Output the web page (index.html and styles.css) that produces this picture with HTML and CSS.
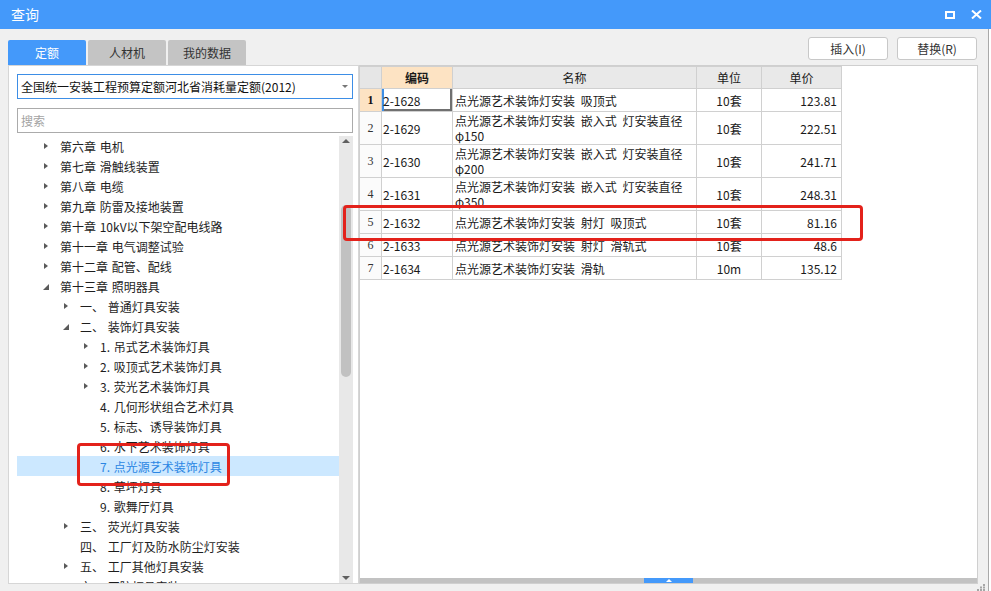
FILE: index.html
```html
<!DOCTYPE html>
<html lang="zh-CN">
<head>
<meta charset="utf-8">
<title>查询</title>
<link rel="stylesheet" href="styles.css">
</head>
<body>
<div class="titlebar">
  <span class="title">查询</span>
  <div class="win-ctrls">
    <span class="ico-max"></span>
    <svg class="ico-close" width="11" height="9" viewBox="0 0 11 9"><path d="M1 0.5 L10 8.5 M10 0.5 L1 8.5" stroke="#fff" stroke-width="2" fill="none"/></svg>
  </div>
</div>
<div class="window">
  <div class="toolbar">
    <div class="tabs">
      <div class="tab active">定额</div>
      <div class="tab">人材机</div>
      <div class="tab">我的数据</div>
    </div>
    <div class="actions">
      <button class="btn">插入(I)</button>
      <button class="btn">替换(R)</button>
    </div>
  </div>
  <div class="panels">
    <div class="left">
      <div class="combo"><span>全国统一安装工程预算定额河北省消耗量定额(2012)</span><i class="caret"></i></div>
      <div class="search">搜索</div>
      <div class="treewrap">
        <div class="tree">
          <div class="node l1"><i class="tw c"></i>第六章 电机</div>
          <div class="node l1"><i class="tw c"></i>第七章 滑触线装置</div>
          <div class="node l1"><i class="tw c"></i>第八章 电缆</div>
          <div class="node l1"><i class="tw c"></i>第九章 防雷及接地装置</div>
          <div class="node l1"><i class="tw c"></i>第十章 10kV以下架空配电线路</div>
          <div class="node l1"><i class="tw c"></i>第十一章 电气调整试验</div>
          <div class="node l1"><i class="tw c"></i>第十二章 配管、配线</div>
          <div class="node l1"><i class="tw e"></i>第十三章 照明器具</div>
          <div class="node l2"><i class="tw c"></i>一、 普通灯具安装</div>
          <div class="node l2"><i class="tw e"></i>二、 装饰灯具安装</div>
          <div class="node l3"><i class="tw c"></i>1. 吊式艺术装饰灯具</div>
          <div class="node l3"><i class="tw c"></i>2. 吸顶式艺术装饰灯具</div>
          <div class="node l3"><i class="tw c"></i>3. 荧光艺术装饰灯具</div>
          <div class="node l3"><i class="tw"></i>4. 几何形状组合艺术灯具</div>
          <div class="node l3"><i class="tw"></i>5. 标志、诱导装饰灯具</div>
          <div class="node l3"><i class="tw"></i>6. 水下艺术装饰灯具</div>
          <div class="node l3 sel"><i class="tw"></i>7. 点光源艺术装饰灯具</div>
          <div class="node l3"><i class="tw"></i>8. 草坪灯具</div>
          <div class="node l3"><i class="tw"></i>9. 歌舞厅灯具</div>
          <div class="node l2"><i class="tw c"></i>三、 荧光灯具安装</div>
          <div class="node l2"><i class="tw"></i>四、 工厂灯及防水防尘灯安装</div>
          <div class="node l2"><i class="tw c"></i>五、 工厂其他灯具安装</div>
          <div class="node l2"><i class="tw c"></i>六、 医院灯具安装</div>
        </div>
        <div class="vscroll">
          <i class="arr up"></i>
          <div class="vthumb"></div>
          <i class="arr down"></i>
        </div>
      </div>
    </div>
    <div class="right">
      <table class="grid">
        <colgroup><col class="c-no"><col class="c-code"><col class="c-name"><col class="c-unit"><col class="c-price"></colgroup>
        <thead>
          <tr><th class="no"></th><th class="hl">编码</th><th>名称</th><th>单位</th><th>单价</th></tr>
        </thead>
        <tbody>
          <tr><td class="no cur-no">1</td><td class="code cur">2-1628</td><td class="name">点光源艺术装饰灯安装 吸顶式</td><td class="unit">10套</td><td class="price">123.81</td></tr>
          <tr class="dbl"><td class="no">2</td><td class="code">2-1629</td><td class="name">点光源艺术装饰灯安装 嵌入式 灯安装直径<br>φ150</td><td class="unit">10套</td><td class="price">222.51</td></tr>
          <tr class="dbl"><td class="no">3</td><td class="code">2-1630</td><td class="name">点光源艺术装饰灯安装 嵌入式 灯安装直径<br>φ200</td><td class="unit">10套</td><td class="price">241.71</td></tr>
          <tr class="dbl"><td class="no">4</td><td class="code">2-1631</td><td class="name">点光源艺术装饰灯安装 嵌入式 灯安装直径<br>φ350</td><td class="unit">10套</td><td class="price">248.31</td></tr>
          <tr><td class="no">5</td><td class="code">2-1632</td><td class="name">点光源艺术装饰灯安装 射灯 吸顶式</td><td class="unit">10套</td><td class="price">81.16</td></tr>
          <tr><td class="no">6</td><td class="code">2-1633</td><td class="name">点光源艺术装饰灯安装 射灯 滑轨式</td><td class="unit">10套</td><td class="price">48.6</td></tr>
          <tr><td class="no">7</td><td class="code">2-1634</td><td class="name">点光源艺术装饰灯安装 滑轨</td><td class="unit">10m</td><td class="price">135.12</td></tr>
        </tbody>
      </table>
      <div class="hscroll"><div class="hthumb"><i></i></div></div>
    </div>
  </div>
  <div class="status">
    <svg class="grip" width="8" height="7" viewBox="0 0 8 7"><g fill="#a6a6a6"><rect x="6" y="0" width="2" height="2"/><rect x="3" y="2.5" width="2" height="2"/><rect x="6" y="2.5" width="2" height="2"/><rect x="0" y="5" width="2" height="2"/><rect x="3" y="5" width="2" height="2"/><rect x="6" y="5" width="2" height="2"/></g></svg>
  </div>
</div>
<div class="mark mark-tree"></div>
<div class="mark mark-row"></div>
</body>
</html>
```
FILE: styles.css
```css
* { box-sizing: border-box; }
html, body { margin: 0; padding: 0; }
body {
  width: 991px;
  height: 591px;
  overflow: hidden;
  position: relative;
  background: #ffffff;
  font-family: "Noto Sans CJK SC", "Microsoft YaHei", sans-serif;
  font-size: 12px;
  color: #1e1e1e;
}

.titlebar {
  height: 29px;
  background: #4499fa;
  color: #fff;
  display: flex;
  align-items: center;
  justify-content: space-between;
  padding: 0 9px 0 11px;
}
.title { font-size: 14px; line-height: 29px; }
.win-ctrls { display: flex; align-items: center; gap: 16px; }
.ico-max { display: block; width: 10px; height: 8px; border: 2px solid #fff; }
.ico-close { display: block; }

.window {
  width: 989px;
  height: 562px;
  background: #f0f0f0;
  border-right: 1px solid #a9a9a9;
  padding: 0 10px 0 8px;
  display: flex;
  flex-direction: column;
}

.toolbar { height: 36px; display: flex; justify-content: space-between; }
.tabs { display: flex; gap: 2px; align-self: flex-end; }
.tab {
  width: 78px;
  height: 25px;
  line-height: 25px;
  text-align: center;
  background: #c4c4c4;
  color: #333;
  border-radius: 2px 2px 0 0;
}
.tab.active { background: #4499fa; color: #fff; }
.actions { display: flex; gap: 9px; margin-top: 8px; margin-right: 1px; align-self: flex-start; }
.btn {
  width: 80px;
  height: 23px;
  padding: 0;
  background: #fff;
  border: 1px solid #c8c8c8;
  border-radius: 3px;
  font-family: inherit;
  font-size: 12px;
  color: #333;
}

.panels { height: 519px; display: flex; }

.left {
  width: 351px;
  flex: none;
  background: #fff;
  border: 1px solid #d6d6d6;
  padding: 8px 5px 0 8px;
  display: flex;
  flex-direction: column;
}
.combo {
  height: 25px;
  flex: none;
  border: 1px solid #3d8ee6;
  display: flex;
  align-items: center;
  justify-content: space-between;
  padding: 0 4px 0 3px;
  color: #111;
  white-space: nowrap;
}
.caret {
  display: block;
  border-left: 3px solid transparent;
  border-right: 3px solid transparent;
  border-top: 3px solid #777;
}
.search {
  height: 25px;
  flex: none;
  margin-top: 9px;
  border: 1px solid #ababab;
  padding-left: 3px;
  line-height: 23px;
  color: #a3a3a3;
}
.treewrap { margin-top: 3px; flex: 1; min-height: 0; display: flex; }
.tree { flex: 1; overflow: hidden; }
.node {
  height: 20px;
  display: flex;
  align-items: center;
  white-space: nowrap;
  word-spacing: 1px;
  color: #1e1e1e;
}
.l1 { padding-left: 27px; }
.l2 { padding-left: 47px; }
.l3 { padding-left: 67px; }
.tw { width: 16px; height: 20px; flex: none; display: flex; align-items: center; }
.tw.c::before {
  content: "";
  border-left: 4px solid #5a5a5a;
  border-top: 3.5px solid transparent;
  border-bottom: 3.5px solid transparent;
}
.tw.e::before {
  content: "";
  margin-left: -1px;
  margin-top: 2px;
  border-bottom: 6px solid #5a5a5a;
  border-left: 6px solid transparent;
}
.node.sel { background: #cce8ff; color: #2b86e3; }

.vscroll {
  width: 14px;
  flex: none;
  background: #e8e8e8;
  display: flex;
  flex-direction: column;
  align-items: center;
  padding: 3px 0;
}
.arr { display: block; border-left: 4px solid transparent; border-right: 4px solid transparent; }
.arr.up { border-bottom: 4px solid #606060; }
.arr.down { border-top: 4px solid #606060; margin-top: auto; }
.vthumb { width: 10px; height: 172px; margin-top: 62px; background: #c1c1c1; border-radius: 5px; }

.right {
  flex: 1;
  background: #fff;
  border: 1px solid #cfcfcf;
  display: flex;
  flex-direction: column;
}
.grid {
  border-collapse: separate;
  border-spacing: 0;
  table-layout: fixed;
  width: 482px;
  border-top: 1px solid #d0d0d0;
  font-size: 12px;
}
.c-no { width: 22px; }
.c-code { width: 71px; }
.c-name { width: 244px; }
.c-unit { width: 65px; }
.c-price { width: 80px; }
.grid th, .grid td {
  border-right: 1px solid #d0d0d0;
  border-bottom: 1px solid #d0d0d0;
  padding: 0;
  white-space: nowrap;
  overflow: hidden;
  color: #1a1a1a;
  vertical-align: middle;
}
.grid th { height: 22px; background: #e9e9e9; font-weight: normal; text-align: center; }
.grid th.no { background: #e6e6e6; }
.grid th.hl { background: #fde3c3; font-weight: bold; }
.grid td { height: 23px; line-height: 15px; }
.grid tr.dbl td { height: 33px; }
.grid td.no { text-align: center; font-family: "Liberation Serif", serif; font-size: 12px; color: #333; background: #fbfbfb; }
.grid td.cur-no { background: #fde3c3; font-weight: bold; color: #111; }
.grid td.code { padding-left: 1px; }
.grid td.name { padding-left: 2px; word-spacing: 3px; }
.grid td.unit { text-align: center; }
.grid td.price { text-align: right; padding-right: 4px; }
.grid td.cur { box-shadow: inset 2px 0 0 #3d8ee6, inset -2px -2px 0 #707070; }

.hscroll {
  margin-top: auto;
  height: 5px;
  flex: none;
  background: #c2c2c2;
  padding-left: 284px;
}
.hthumb {
  width: 49px;
  height: 5px;
  background: #4499fa;
  display: flex;
  align-items: center;
  justify-content: center;
}
.hthumb i {
  display: block;
  border-left: 3px solid transparent;
  border-right: 3px solid transparent;
  border-bottom: 3px solid #fff;
}

.status { height: 7px; flex: none; display: flex; justify-content: flex-end; margin-right: -7px; }
.grip { display: block; }

.mark {
  position: absolute;
  border: 3px solid #e3221b;
  border-radius: 4px;
  pointer-events: none;
}
.mark-tree { left: 77px; top: 443px; width: 153px; height: 43px; }
.mark-row { left: 343px; top: 205px; width: 520px; height: 36px; }
```
